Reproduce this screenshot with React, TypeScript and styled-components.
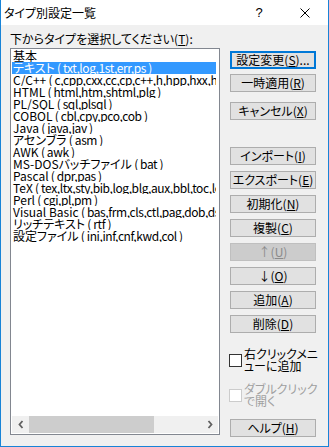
import React from "react";
import styled, { createGlobalStyle } from "styled-components";

const Global = createGlobalStyle`
  html, body { margin: 0; padding: 0; background: #ffffff; }
  * { box-sizing: border-box; }
`;

const FONT = `"Noto Sans CJK JP", "Liberation Sans", sans-serif`;

const Window = styled.div`
  width: 329px;
  height: 447px;
  display: flex;
  flex-direction: column;
  border: 1px solid #1883d7;
  border-top: none;
  font-family: ${FONT};
  font-feature-settings: "palt";
  font-size: 12px;
  color: #000;
  overflow: hidden;
`;

const TitleBar = styled.div`
  height: 25px;
  flex: none;
  background: #ffffff;
  display: flex;
  align-items: center;
  padding-left: 3px;
`;

const Title = styled.div`
  flex: 1;
  font-size: 12px;
  line-height: 14px;
`;

const TitleButton = styled.div<{ $w: number }>`
  width: ${(p) => p.$w}px;
  height: 25px;
  display: flex;
  align-items: center;
  justify-content: center;
  font-family: "Liberation Sans", sans-serif;
  font-size: 13px;
`;

const Body = styled.div`
  flex: 1;
  background: #f0f0f0;
  display: flex;
  padding-left: 9px;
`;

const LeftCol = styled.div`
  width: 210px;
  display: flex;
  flex-direction: column;
`;

const Label = styled.div`
  margin-top: 8px;
  line-height: 12px;
  height: 12px;
  white-space: nowrap;
`;

const ListBox = styled.div`
  margin-top: 3px;
  height: 387px;
  border: 1px solid #828790;
  background: #ffffff;
  padding: 1px;
  display: flex;
  flex-direction: column;
`;

const Items = styled.div`
  flex: 1;
  overflow: hidden;
`;

const Item = styled.div<{ $sel?: boolean }>`
  height: 12px;
  line-height: 12px;
  white-space: nowrap;
  overflow: hidden;
  margin-right: 2px;
  padding-left: 1px;
  background: ${(p) => (p.$sel ? "#3399ff" : "transparent")};
  color: ${(p) => (p.$sel ? "#ffffff" : "#000000")};
`;

const Ext = styled.span`
  letter-spacing: -0.4px;
`;

const HScroll = styled.div`
  height: 17px;
  flex: none;
  background: #f0f0f0;
  display: flex;
  align-items: stretch;
`;

const ScrollArrow = styled.div`
  width: 17px;
  display: flex;
  align-items: center;
  justify-content: center;
`;

const ScrollTrack = styled.div`
  flex: 1;
  display: flex;
`;

const Thumb = styled.div`
  width: 125px;
  background: #cdcdcd;
`;

const RightCol = styled.div`
  margin-left: 9px;
  width: 88px;
  display: flex;
  flex-direction: column;
`;

const Button = styled.div<{ $mt: number; $default?: boolean; $disabled?: boolean }>`
  margin-top: ${(p) => p.$mt}px;
  margin-left: 1px;
  width: 86px;
  height: 18px;
  flex: none;
  display: flex;
  align-items: center;
  justify-content: center;
  white-space: nowrap;
  line-height: 12px;
  background: ${(p) => (p.$disabled ? "#cccccc" : "#e1e1e1")};
  border: ${(p) =>
    p.$default ? "2px solid #0078d7" : p.$disabled ? "1px solid #bfbfbf" : "1px solid #adadad"};
  color: ${(p) => (p.$disabled ? "#8a8a8a" : "#000000")};
`;

const CheckRow = styled.div<{ $mt: number; $disabled?: boolean }>`
  margin-top: ${(p) => p.$mt}px;
  display: flex;
  align-items: center;
  gap: 2px;
  color: ${(p) => (p.$disabled ? "#a0a0a0" : "#000000")};
`;

const Box = styled.div<{ $disabled?: boolean }>`
  width: 13px;
  height: 13px;
  flex: none;
  background: #ffffff;
  border: 1px solid ${(p) => (p.$disabled ? "#cccccc" : "#333333")};
`;

const CheckText = styled.div`
  line-height: 12px;
  white-space: nowrap;
`;

const Chevron = ({ dir }: { dir: "l" | "r" }) => (
  <svg width="6" height="9" viewBox="0 0 6 9">
    <polyline
      points={dir === "l" ? "4.5,1 1.5,4.5 4.5,8" : "1.5,1 4.5,4.5 1.5,8"}
      fill="none"
      stroke="#606060"
      strokeWidth="1.8"
    />
  </svg>
);

const items: [string, string | null][] = [
  ["基本", null],
  ["テキスト", "txt,log,1st,err,ps"],
  ["C/C++", "c,cpp,cxx,cc,cp,c++,h,hpp,hxx,hh,inl,rc,hm"],
  ["HTML", "html,htm,shtml,plg"],
  ["PL/SQL", "sql,plsql"],
  ["COBOL", "cbl,cpy,pco,cob"],
  ["Java", "java,jav"],
  ["アセンブラ", "asm"],
  ["AWK", "awk"],
  ["MS-DOSバッチファイル", "bat"],
  ["Pascal", "dpr,pas"],
  ["TeX", "tex,ltx,sty,bib,log,blg,aux,bbl,toc,lof,lot,idx,ind,glo"],
  ["Perl", "cgi,pl,pm"],
  ["Visual Basic", "bas,frm,cls,ctl,pag,dob,dsr,vb"],
  ["リッチテキスト", "rtf"],
  ["設定ファイル", "ini,inf,cnf,kwd,col"],
];

export default function App() {
  return (
    <>
      <Global />
      <Window>
        <TitleBar>
          <Title>タイプ別設定一覧</Title>
          <TitleButton $w={46}>?</TitleButton>
          <TitleButton $w={46}>
            <svg width="10" height="10" viewBox="0 0 10 10">
              <path d="M0.5 0.5 L9.5 9.5 M9.5 0.5 L0.5 9.5" stroke="#000" strokeWidth="1" />
            </svg>
          </TitleButton>
        </TitleBar>
        <Body>
          <LeftCol>
            <Label>
              下からタイプを選択してください(<u>T</u>):
            </Label>
            <ListBox>
              <Items>
                {items.map(([name, ext], i) => (
                  <Item key={i} $sel={i === 1}>
                    {name}
                    {ext !== null && <Ext> ( {ext} )</Ext>}
                  </Item>
                ))}
              </Items>
              <HScroll>
                <ScrollArrow>
                  <Chevron dir="l" />
                </ScrollArrow>
                <ScrollTrack>
                  <Thumb />
                </ScrollTrack>
                <ScrollArrow>
                  <Chevron dir="r" />
                </ScrollArrow>
              </HScroll>
            </ListBox>
          </LeftCol>
          <RightCol>
            <Button $mt={26} $default>
              設定変更(<u>S</u>)...
            </Button>
            <Button $mt={5}>
              一時適用(<u>R</u>)
            </Button>
            <Button $mt={10}>
              キャンセル(<u>X</u>)
            </Button>
            <Button $mt={27}>
              インポート(<u>I</u>)
            </Button>
            <Button $mt={6}>
              エクスポート(<u>E</u>)
            </Button>
            <Button $mt={6}>
              初期化(<u>N</u>)
            </Button>
            <Button $mt={6}>
              複製(<u>C</u>)
            </Button>
            <Button $mt={6} $disabled>
              ↑(<u>U</u>)
            </Button>
            <Button $mt={6}>
              ↓(<u>O</u>)
            </Button>
            <Button $mt={6}>
              追加(<u>A</u>)
            </Button>
            <Button $mt={6}>
              削除(<u>D</u>)
            </Button>
            <CheckRow $mt={15}>
              <Box />
              <CheckText>
                右クリックメニ
                <br />
                ューに追加
              </CheckText>
            </CheckRow>
            <CheckRow $mt={11} $disabled>
              <Box $disabled />
              <CheckText>
                ダブルクリック
                <br />
                で開く
              </CheckText>
            </CheckRow>
            <Button $mt={12}>
              ヘルプ(<u>H</u>)
            </Button>
          </RightCol>
        </Body>
      </Window>
    </>
  );
}
